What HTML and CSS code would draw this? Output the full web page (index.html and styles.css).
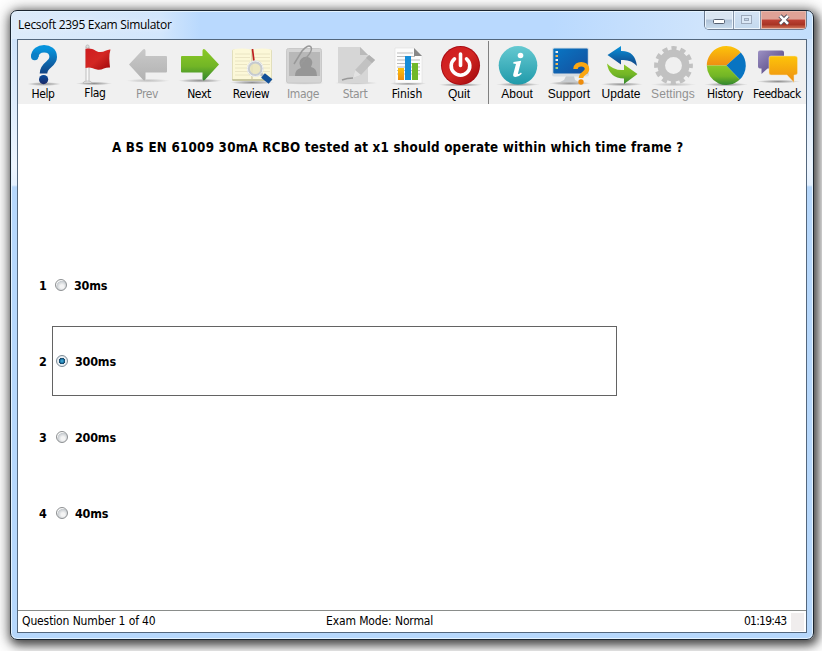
FILE: index.html
```html
<!DOCTYPE html>
<html lang="en">
<head>
<meta charset="utf-8">
<title>Lecsoft 2395 Exam Simulator</title>
<link rel="stylesheet" href="styles.css">
</head>
<body>
<svg width="0" height="0" class="defs">
  <defs>
    <linearGradient id="blue" x2="0" y2="1"><stop stop-color="#0793dc"/><stop offset="1" stop-color="#124384"/></linearGradient>
    <linearGradient id="navy" x2="0" y2="1"><stop stop-color="#074b9b"/><stop offset="1" stop-color="#1d2a68"/></linearGradient>
    <linearGradient id="red" x2="1" y2="1"><stop stop-color="#cf1b1f"/><stop offset=".5" stop-color="#d32723"/><stop offset="1" stop-color="#9f080c"/></linearGradient>
    <linearGradient id="green" x2="0" y2="1"><stop stop-color="#8bc926"/><stop offset=".55" stop-color="#72b526"/><stop offset="1" stop-color="#31862e"/></linearGradient>
    <linearGradient id="grey" x2="0" y2="1"><stop stop-color="#c9c9c9"/><stop offset="1" stop-color="#b2b2b2"/></linearGradient>
    <linearGradient id="orange" x2="0" y2="1"><stop stop-color="#fdc409"/><stop offset="1" stop-color="#ee8e13"/></linearGradient>
    <linearGradient id="teal" x2="0" y2="1"><stop stop-color="#65c9d1"/><stop offset="1" stop-color="#209aaa"/></linearGradient>
    <linearGradient id="purple" x2="1" y2="1"><stop stop-color="#9c91c4"/><stop offset="1" stop-color="#493978"/></linearGradient>
    <linearGradient id="screen" x2="1" y2="1"><stop stop-color="#0876c4"/><stop offset="1" stop-color="#164e9c"/></linearGradient>
    <radialGradient id="shade"><stop stop-color="#777" stop-opacity=".8"/><stop offset=".6" stop-color="#999" stop-opacity=".5"/><stop offset="1" stop-color="#aaa" stop-opacity="0"/></radialGradient>
  </defs>
</svg>
<main class="window">
  <header class="titlebar">
    <h1 class="title">Lecsoft 2395 Exam Simulator</h1>
    <div class="controls">
      <button class="control" aria-label="Minimize"><svg width="14" height="12"><rect x="1.5" y="5.5" width="11" height="4" rx="1" fill="#fff" stroke="#555f70"/></svg></button>
      <button class="control maximize" aria-label="Maximize"><svg width="14" height="12"><rect x="1.5" y="1.5" width="10" height="8" fill="#dce9f7" stroke="#9daabc"/><rect x="4.5" y="4.5" width="4" height="2" fill="#c3d6ea" stroke="#9daabc"/></svg></button>
      <button class="control close" aria-label="Close"><svg width="14" height="12"><path d="M3 1.8 11 9.8M11 1.8 3 9.8" stroke="#54505c" stroke-width="4.4"/><path d="M3 1.8 11 9.8M11 1.8 3 9.8" stroke="#fff" stroke-width="2.5"/></svg></button>
    </div>
  </header>
  <div class="client">
    <nav class="toolbar">
      <button class="tool"><svg class="icon" viewBox="0 0 52 46"><ellipse cx="27" cy="42" rx="17" ry="2" fill="url(#shade)"/><path d="M17.8 15C18 4 36.2 4 36.2 15 36.2 23 26.5 22 26.5 31.5" fill="none" stroke="url(#blue)" stroke-width="7.6"/><circle cx="17.700" cy="14.500" r="3.700" fill="#0b7fc6"/><circle cx="26.6" cy="37.6" r="4.6" fill="url(#navy)"/></svg><span class="label help">Help</span></button>
      <button class="tool"><svg class="icon" viewBox="0 0 52 46"><ellipse cx="25" cy="41.500" rx="18" ry="1.700" fill="url(#shade)"/><path d="M17 5h3v35h-3z" fill="#f8f8f8" stroke="#aaa" stroke-width=".7"/><circle cx="18.500" cy="4.500" r="1.600" fill="#ddd" stroke="#aaa" stroke-width=".6"/><path d="M14 41q0-2 4.500-2t4.500 2z" fill="#eee" stroke="#aaa" stroke-width=".6"/><path d="M16.500 7c8-2 11 4 15 3 4 0 7-3 10-2.500-2 6-1 12-.5 18-5-.5-8 3-13 2-4-1-7-3-11.500-1.500z" fill="url(#red)"/></svg><span class="label flag">Flag</span></button>
      <button class="tool off"><svg class="icon" viewBox="0 0 52 46"><ellipse cx="27" cy="38.700" rx="22" ry="2" fill="url(#shade)" opacity=".5"/><path d="M8 22.500 22 7.500q2-1.500 2.500 1v5.500H45q1 0 1 1v14.500q0 1-1 1H24.500V37q-.5 2.500-2.500.8z" fill="url(#grey)"/></svg><span class="label prev">Prev</span></button>
      <button class="tool"><svg class="icon" viewBox="0 0 52 46"><ellipse cx="27" cy="38.700" rx="22" ry="2" fill="url(#shade)"/><path d="M46 22.500 32 7.500q-2-1.500-2.500 1v5.500H9q-1 0-1 1v14.500q0 1 1 1H29.500V37q.5 2.500 2.500.8z" fill="url(#green)"/></svg><span class="label next">Next</span></button>
      <button class="tool"><svg class="icon" viewBox="0 0 52 46"><ellipse cx="27" cy="40.500" rx="22" ry="2" fill="url(#shade)"/><rect x="7" y="7.500" width="40" height="31.500" rx="1.500" fill="#c9c7a0"/><path d="M7.500 7.500q9-2 19.500 0 10-2 19.500 0v29.500H7.500z" fill="#fcf8d8"/><path d="M10 12h15m4 0h16M10 15.500h15m4 0h16M10 19h15m4 0h16M10 22.500h12m16 0h7M10 26h12m16 0h7M10 29.500h13m15 0h7M10 33h15" stroke="#e6dfbf" stroke-width=".8"/><path d="M27 8v29" stroke="#c9bd92"/><path d="M27.500 7 29 19" stroke="#bd1e20" stroke-width="1.700"/><circle cx="30.200" cy="26.700" r="6.800" fill="#e9e4bd" fill-opacity=".85" stroke="#c6cbd0" stroke-width="3"/><circle cx="30.200" cy="26.700" r="7.800" fill="none" stroke="#f3f4f5"/><path d="m36 32 3 2.500" stroke="#b7bec6" stroke-width="3"/><path d="m38 33.500 7.500 6" stroke="#125098" stroke-width="6"/></svg><span class="label review">Review</span></button>
      <button class="tool off"><svg class="icon" viewBox="0 0 52 46"><ellipse cx="27" cy="41" rx="21" ry="1.800" fill="url(#shade)" opacity=".5"/><rect x="9.500" y="6.500" width="35" height="34.500" rx="2" fill="#d4d4d4" stroke="#c9c9c9"/><rect x="12" y="10" width="31" height="24" fill="#b8b8b8"/><path d="M18 34q0-7 6-8-3-6 0-9 4-4 9-1 4 3 1 9 6 1 6 9z" fill="#969696"/><path d="M17 22 25 9q6-7 9-4 2 3-4 10l-6 7" fill="none" stroke="#999" stroke-width="1.500"/></svg><span class="label image">Image</span></button>
      <button class="tool off"><svg class="icon" viewBox="0 0 52 46"><ellipse cx="27" cy="41" rx="22" ry="1.800" fill="url(#shade)" opacity=".5"/><path d="M9 5h22l8 8v28H9z" fill="#d6d6d6"/><path d="M31 5v8h8z" fill="#bababa"/><path d="m24 36 2-8 14-15 6 5-14 15z" fill="#c2c2c2"/><path d="m37 16 6 5 3-3-6-5z" fill="#b2b2b2"/><path d="m24 36 2-8 6 5z" fill="#e2e2e2"/><path d="M13 38q5-2 11-2" fill="none" stroke="#999" stroke-width="1.400"/></svg><span class="label start">Start</span></button>
      <button class="tool"><svg class="icon" viewBox="0 0 52 46"><ellipse cx="27" cy="41.500" rx="18" ry="2" fill="url(#shade)"/><path d="M14 6h19l8 8v27H14z" fill="#fcfcfc" stroke="#ddd" stroke-width=".6"/><path d="M16 11h16M16 14.500h18M16 18h23M16 21.500h23M16 25h23M16 28.500h23M16 32h23" stroke="#bbb"/><path d="M33 6v8h8z" fill="#888"/><path d="M17 26h6v12h-6z" fill="url(#orange)"/><path d="M24 14h6v24h-6z" fill="#158dd8"/><path d="M31 21h6v17h-6z" fill="#71b82a"/></svg><span class="label finish">Finish</span></button>
      <button class="tool"><svg class="icon" viewBox="0 0 52 46"><ellipse cx="27.500" cy="42.800" rx="22" ry="1.800" fill="url(#shade)"/><circle cx="27.500" cy="23.500" r="19.500" fill="#a90b12"/><circle cx="27.500" cy="23.500" r="18.500" fill="url(#red)"/><path d="M21.500 16.800a9.300 9.300 0 1 0 12 0M27.500 12v11.500" fill="none" stroke="#fff" stroke-width="3.600" stroke-linecap="round"/></svg><span class="label quit">Quit</span></button>
      <span class="separator"></span>
      <button class="tool"><svg class="icon" viewBox="0 0 52 46"><ellipse cx="27" cy="42.500" rx="22" ry="1.800" fill="url(#shade)"/><circle cx="27" cy="23.300" r="19.300" fill="url(#teal)"/><circle cx="29.500" cy="13.500" r="2.800" fill="#fff"/><path d="M22.500 20 30.200 18.800 27 31.500q-.3 1.500 3-1l.8 1.200q-3 3.300-6.300 3.300-3 0-2.200-3l2.700-10-2.800-.5z" fill="#fff"/></svg><span class="label about">About</span></button>
      <button class="tool"><svg class="icon" viewBox="0 0 52 46"><ellipse cx="27" cy="41.300" rx="21" ry="2" fill="url(#shade)"/><path d="m23 34-2 4-4 2h19l-4-2-1-4z" fill="#c9cccf"/><rect x="9" y="5.500" width="37" height="29" rx="2" fill="#d8dde2"/><rect x="10.300" y="6.500" width="34.500" height="25" rx="1" fill="url(#screen)"/><g fill="#eee"><path d="M12.500 9H15v2h-2.500zM12.500 17H15v2h-2.500z"/><path fill="#f7b650" d="M12.500 13H15v2h-2.500zM12.500 21H15v2h-2.500z"/><path fill="#a9cf78" d="M12.500 25H15v2h-2.500z"/></g><path d="M32.500 27c0-6.500 11.500-6.500 11.500 0 0 4.500-6 4-6 9" fill="none" stroke="#fba713" stroke-width="4.500"/><circle cx="38" cy="40" r="2.700" fill="#ee8c0c"/></svg><span class="label support">Support</span></button>
      <button class="tool"><svg class="icon" viewBox="0 0 52 46"><ellipse cx="27" cy="42.300" rx="21" ry="1.800" fill="url(#shade)"/><path d="M12.500 13 26 4v5q14-.5 16 15-6-7-16-6v4.500z" fill="url(#blue)"/><path d="M42.500 32 29 22.500v5.500q-10 1-17-6.500Q14 36 29 36.500V42z" fill="url(#green)"/></svg><span class="label update">Update</span></button>
      <button class="tool off"><svg class="icon" viewBox="0 0 52 46"><ellipse cx="26.500" cy="42.500" rx="23" ry="1.800" fill="url(#shade)" opacity=".5"/><circle cx="26.500" cy="23.500" r="12.200" fill="none" stroke="#c1c1c1" stroke-width="7.500"/><circle cx="26.500" cy="23.500" r="17.300" fill="none" stroke="#c1c1c1" stroke-width="4.200" stroke-dasharray="5.200 3.858" stroke-dashoffset="2.600"/></svg><span class="label settings">Settings</span></button>
      <button class="tool"><svg class="icon" viewBox="0 0 52 46"><ellipse cx="27" cy="42.500" rx="22" ry="1.800" fill="url(#shade)"/><path d="M27.300 23.500H7.800a19.500 19.500 0 0 1 34-13z" fill="url(#orange)"/><path d="M27.300 23.500 41.800 10.500a19.500 19.500 0 0 1-1 27z" fill="#0874c2"/><path d="M27.300 23.500H7.800a19.500 19.500 0 0 0 33 14z" fill="url(#green)"/></svg><span class="label history">History</span></button>
      <button class="tool"><svg class="icon" viewBox="0 0 52 46"><ellipse cx="27" cy="39.500" rx="22" ry="1.700" fill="url(#shade)"/><path d="M9 8.500h22q2 0 2 2v14q0 2-2 2H16.500L10.500 32v-5.500H9q-2 0-2-2v-14q0-2 2-2z" fill="url(#purple)"/><path d="M20 14h24q2.500 0 2.500 2v15q0 2-2.500 2h-1v7.500L36 33H20q-2 0-2-2V16q0-2 2-2z" fill="url(#orange)" stroke="#f4e6c0" stroke-width=".5"/></svg><span class="label feedback">Feedback</span></button>
    </nav>
    <section class="exam">
      <h2 class="question">A BS EN 61009 30mA RCBO tested at x1 should operate within which time frame ?</h2>
      <ol class="answers">
        <li class="answer first"><span class="number">1</span><label class="choice"><span class="radio"></span><span class="text">30ms</span></label></li>
        <li class="answer"><span class="number">2</span><label class="choice selected"><span class="radio checked"></span><span class="text">300ms</span></label></li>
        <li class="answer"><span class="number">3</span><label class="choice"><span class="radio"></span><span class="text">200ms</span></label></li>
        <li class="answer"><span class="number">4</span><label class="choice"><span class="radio"></span><span class="text">40ms</span></label></li>
      </ol>
    </section>
    <footer class="status"><span class="count">Question Number 1 of 40</span><span class="mode">Exam Mode: Normal</span><span class="time">01:19:43</span><span class="grip"></span></footer>
  </div>
</main>
</body>
</html>
```
FILE: styles.css
```css
* { box-sizing: border-box; }
body { margin: 0; height: 651px; padding: 10px 8px 10px 10px; overflow: hidden; background: #fff; color: #000; }
.defs { display: block; height: 0; }
button { padding: 0; border: 0; background: none; color: inherit; }
h1, h2, ol { margin: 0; padding: 0; font-weight: normal; }
.window {
  width: 804px; height: 630px; padding: 0 6px 6px; border: 1px solid #1b2530; border-radius: 7px;
  background: linear-gradient(90deg, #ddebfa 0, #d2e6fc 150px, #b9d9fe 190px, #b9d9fe 540px, #cfe4fc 690px, #c2defc 100%) top / 100% 28px no-repeat,
    linear-gradient(#cfe3fa 28px, #edf5fe 155px, #e5f1ff 174px, #b6d7fb 176px);
  box-shadow: inset 0 0 0 1px #e4f3ff, 2px 3px 10px 2px rgba(0,0,0,.65), 1px 2px 18px 3px rgba(0,0,0,.25);
}
.titlebar { display: flex; justify-content: space-between; height: 28px; }
.title { margin: 5px 0 0 1px; font: 12px/18px "Open Sans", sans-serif; letter-spacing: -.3px; white-space: nowrap; text-shadow: 0 0 6px #fff; }
.controls { display: flex; width: 103px; height: 19px; border: 1px solid #6c7c91; border-top: 0; border-radius: 0 0 5px 5px; overflow: hidden; }
.control { display: flex; width: 29px; justify-content: center; align-items: center; border-right: 1px solid #8796aa; background: linear-gradient(#d9e5f2 0 45%, #b0c3d9 50%, #c9dced); box-shadow: inset 0 0 0 1px #edf5fd; }
.maximize { width: 27px; background: linear-gradient(#d4e3f4, #c4d9ee); }
.close { flex: 1; border: 0; background: linear-gradient(#dfa296 0 45%, #bd4134 50%, #a83425 75%, #d77f60); box-shadow: inset 0 0 0 1px #e6b9ad; }
.client { display: flex; flex-direction: column; width: 790px; height: 594px; border: 1px solid #53677d; background: #fff; }
.toolbar { display: flex; flex: none; height: 64px; padding-top: 2px; background: #f0f0f0; }
.tool { display: flex; flex-direction: column; align-items: center; flex: none; width: 52px; }
.toolbar { text-indent: 0; }
.tool:first-child { margin-left: -1px; }
.icon { width: 52px; height: 46px; flex: none; margin-bottom: -1px; }
.label { font: 12px/14px "DejaVu Sans Condensed", "DejaVu Sans", sans-serif; font-stretch: condensed; letter-spacing: -.35px; white-space: nowrap; }
.off { color: #929292; }
.flag { margin-top: -1px; }
.finish { letter-spacing: 0; }
.feedback { letter-spacing: -.45px; }
.about, .support, .update, .settings, .quit { font: 12px/14px "Liberation Sans", Arial, sans-serif; letter-spacing: .05px; }
.separator { width: 1px; height: 63px; margin: -1px 2px 0 3px; background: #808080; }
.exam { flex: 1; }
.question { margin: 35px 0 0 94px; font: bold 13.3px/18px "DejaVu Sans Condensed", "DejaVu Sans", sans-serif; font-stretch: condensed; letter-spacing: .225px; white-space: nowrap; }
.answers { margin-top: 93px; list-style: none; font: bold 12.5px/16px "DejaVu Sans Condensed", "DejaVu Sans", sans-serif; font-stretch: condensed; }
.answer { display: flex; align-items: center; height: 70px; margin-bottom: 6px; }
.number { width: 13px; margin-left: 21px; padding-top: 2px; }
.choice { display: flex; align-items: center; width: 565px; height: 70px; border: 1px solid transparent; padding-left: 3px; }
.first .choice { padding-left: 2px; }
.selected { border-color: #636363; }
.radio { width: 12px; height: 12px; margin-right: 7px; border: 1px solid #8d9092; border-radius: 50%; background: radial-gradient(circle at 60% 65%, #f4f4f4 20%, #c6cbcf 60%, #f8f8f8 66%); }
.checked { border-color: #7d8b96; background: radial-gradient(circle at 40% 40%, #6cc4e8, #1a7fb0 45%, #123a5c) content-box #e8eef2; padding: 2px; background-clip: content-box, border-box; position: relative; }
.checked { padding: 0; background: radial-gradient(circle closest-side, #52b3dc 0, #1b7cad 35%, #153f61 58%, #e8eef2 68%); }
.text { padding-top: 2px; letter-spacing: -.2px; }
.status { display: flex; align-items: center; flex: none; height: 22px; border-top: 1px solid #8a8d8b; font: 12px/16px "DejaVu Sans Condensed", "DejaVu Sans", sans-serif; font-stretch: condensed; letter-spacing: -.12px; white-space: nowrap; }
.count { width: 304px; padding: 0 0 2px 4px; }
.mode { width: 418px; padding: 0 0 2px 4px; }
.time { width: 48px; padding: 0 0 2px 4px; letter-spacing: -.75px; }
.grip { width: 13px; height: 18px; margin-left: 3px; background: #f0eded; }
```
